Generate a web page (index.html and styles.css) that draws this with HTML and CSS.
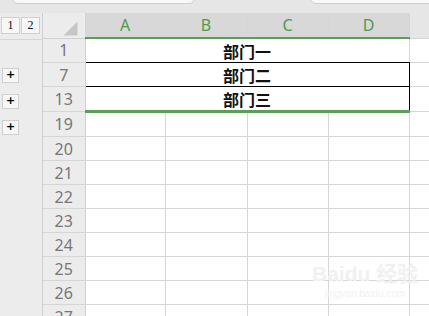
FILE: index.html
```html
<!DOCTYPE html>
<html lang="zh-CN">
<head>
  <meta charset="UTF-8" />
  <title>Sheet</title>
  <link rel="stylesheet" href="styles.css">
</head>
<body>
  <div class="topbar">
    <div class="tab tab-left"></div>
    <div class="tab tab-right"></div>
  </div>

  <div class="main">
    <div class="outline">
      <div class="levels">
        <span class="lvl">1</span>
        <span class="lvl">2</span>
      </div>
      <div class="row-gap"></div>
      <div class="plus">+</div>
      <div class="plus">+</div>
      <div class="plus">+</div>
    </div>

    <table class="sheet">
      <colgroup>
        <col class="c-head">
        <col class="c-a">
        <col class="c-b">
        <col class="c-c">
        <col class="c-d">
        <col class="c-rest">
      </colgroup>
      <thead>
        <tr>
          <th class="corner"><span class="tri"></span></th>
          <th class="col sel">A</th>
          <th class="col sel">B</th>
          <th class="col sel">C</th>
          <th class="col sel">D</th>
          <th class="col rest"></th>
        </tr>
      </thead>
      <tbody>
        <tr>
          <td class="rh">1</td>
          <td class="merged" colspan="4">部门一</td>
          <td></td>
        </tr>
        <tr>
          <td class="rh">7</td>
          <td class="merged boxed" colspan="4">部门二</td>
          <td></td>
        </tr>
        <tr>
          <td class="rh">13</td>
          <td class="merged boxed last" colspan="4">部门三</td>
          <td></td>
        </tr>
        <tr><td class="rh">19</td><td></td><td></td><td></td><td></td><td></td></tr>
        <tr><td class="rh">20</td><td></td><td></td><td></td><td></td><td></td></tr>
        <tr><td class="rh">21</td><td></td><td></td><td></td><td></td><td></td></tr>
        <tr><td class="rh">22</td><td></td><td></td><td></td><td></td><td></td></tr>
        <tr><td class="rh">23</td><td></td><td></td><td></td><td></td><td></td></tr>
        <tr><td class="rh">24</td><td></td><td></td><td></td><td></td><td></td></tr>
        <tr><td class="rh">25</td><td></td><td></td><td></td><td></td><td></td></tr>
        <tr><td class="rh">26</td><td></td><td></td><td></td><td></td><td></td></tr>
        <tr><td class="rh">27</td><td></td><td></td><td></td><td></td><td></td></tr>
      </tbody>
    </table>
  </div>

  <!-- faint watermark -->
  <div class="watermark">
    <div class="wm-logo">Bai<span class="paw">du</span> 经验</div>
    <div class="wm-url">jingyan.baidu.com</div>
  </div>
</body>
</html>
```

FILE: styles.css
```css
body {
  margin: 0;
  width: 429px;
  height: 316px;
  overflow: hidden;
  background: #e8e8e8;
  font-family: "Noto Sans", "Open Sans", sans-serif;
  position: relative;
}

.topbar {
  height: 13px;
  position: relative;
  background: #e6e6e6;
}

.tab {
  position: absolute;
  top: -6px;
  height: 8px;
  background: #f8f8f8;
  border: 1px solid #cfcfcf;
  border-radius: 0 0 6px 6px;
}

.tab-left {
  left: 12px;
  width: 181px;
}

.tab-right {
  left: 310px;
  width: 130px;
}

.main {
  display: flex;
  align-items: flex-start;
}

.outline {
  width: 42px;
  height: 303px;
  flex: none;
  background: #ececec;
  border-right: 1px solid #d0d0d0;
}

.levels {
  display: flex;
  gap: 1px;
  padding: 4px 0 0 1px;
  height: 22px;
  border-bottom: 1px solid #d6d6d6;
}

.lvl {
  width: 17px;
  height: 15px;
  background: #f7f7f7;
  border: 1px solid #cfcfcf;
  font-family: "Liberation Serif", serif;
  font-size: 12px;
  line-height: 15px;
  text-align: center;
  color: #111;
}

.row-gap {
  height: 28px;
}

.plus {
  width: 15px;
  height: 13px;
  margin: 0 0 11px 2px;
  background: #f7f7f7;
  border: 1px solid #cfcfcf;
  font-family: "DejaVu Sans", sans-serif;
  font-weight: bold;
  font-size: 11px;
  line-height: 12px;
  text-align: center;
  color: #000;
}

.sheet {
  border-collapse: collapse;
  table-layout: fixed;
  width: 387px;
  background: #fff;
}

.c-head { width: 42px; }
.c-a { width: 80px; }
.c-b { width: 82px; }
.c-c { width: 81px; }
.c-d { width: 81px; }
.c-rest { width: 21px; }

th, td {
  border: 1px solid #d6d6d6;
  padding: 0;
  height: 23px;
  line-height: 20px;
}

th {
  height: 24px;
  font-weight: normal;
  border-top: none;
  border-bottom: 2px solid #5a9e5a;
}

.corner {
  background: #ececec;
  position: relative;
  border-left: none;
  border-bottom: 1px solid #d0d0d0;
}

.tri {
  position: absolute;
  right: 7px;
  bottom: 2px;
  width: 14px;
  height: 14px;
  background: #c6c6c6;
  clip-path: polygon(100% 0, 100% 100%, 0 100%);
}

.col {
  font-size: 16px;
  color: #4e9a4e;
  text-align: center;
}

.col.sel {
  background: #d8d8d8;
}

.col.rest {
  background: #e6e6e6;
  border-bottom: 1px solid #d6d6d6;
}

.rh {
  background: #ececec;
  color: #777;
  font-size: 16px;
  text-align: center;
  border-left: none;
  border-right: 1px solid #cfcfcf;
}

.merged {
  text-align: center;
  font-family: "Noto Sans CJK SC", sans-serif;
  font-weight: bold;
  font-size: 16px;
  color: #111;
  border-bottom-color: #000;
}

.boxed {
  border: 1px solid #000;
}

.last {
  border-bottom: 3px solid #5a9e5a;
}

.watermark {
  position: absolute;
  left: 312px;
  top: 261px;
  color: #f1f1f1;
  font-family: "Liberation Sans", "Noto Sans CJK SC", sans-serif;
  text-align: center;
}

.wm-logo {
  font-size: 21px;
  font-weight: bold;
  line-height: 26px;
}

.wm-url {
  font-size: 10px;
  line-height: 14px;
}
```
